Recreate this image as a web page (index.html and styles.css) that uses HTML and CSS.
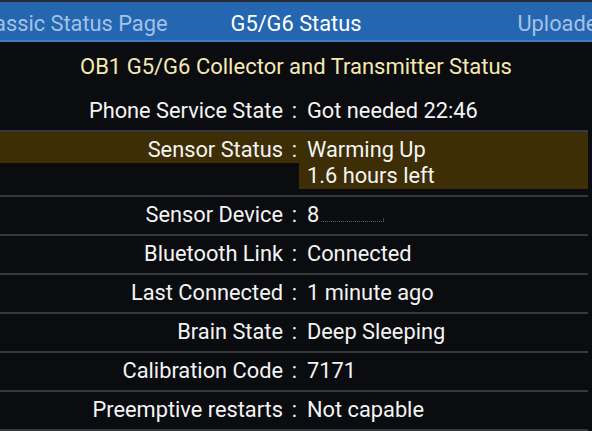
FILE: index.html
```html
<!DOCTYPE html>
<html>
<head>
<meta charset="utf-8">
<link rel="stylesheet" href="styles.css">
</head>
<body>
<div class="topbar">
  <div class="tab tab-prev"><span>Classic Status Page</span></div>
  <div class="tab tab-current">G5/G6 Status</div>
  <div class="tab tab-next"><span>Uploader Status</span></div>
</div>
<div class="title">OB1 G5/G6 Collector and Transmitter Status</div>
<div class="list">
  <div class="row">
    <div class="label">Phone Service State</div><div class="colon">:</div><div class="value">Got needed 22:46</div>
  </div>
  <div class="row row-warn">
    <div class="label">Sensor Status</div><div class="colon">:</div><div class="value">Warming Up<br>1.6 hours left</div>
  </div>
  <div class="row">
    <div class="label">Sensor Device</div><div class="colon">:</div><div class="value">8<span class="masked"></span></div>
  </div>
  <div class="row">
    <div class="label">Bluetooth Link</div><div class="colon">:</div><div class="value">Connected</div>
  </div>
  <div class="row">
    <div class="label">Last Connected</div><div class="colon">:</div><div class="value">1 minute ago</div>
  </div>
  <div class="row">
    <div class="label">Brain State</div><div class="colon">:</div><div class="value">Deep Sleeping</div>
  </div>
  <div class="row">
    <div class="label">Calibration Code</div><div class="colon">:</div><div class="value">7171</div>
  </div>
  <div class="row">
    <div class="label">Preemptive restarts</div><div class="colon">:</div><div class="value">Not capable</div>
  </div>
</div>
</body>
</html>
```

FILE: styles.css
```css
html, body {
  margin: 0;
  padding: 0;
  background: #0b0c10;
  overflow: hidden;
}
body {
  font-family: Roboto, "Noto Sans", sans-serif;
  font-size: 21.8px;
  color: #f4f4f4;
  width: 592px;
  height: 431px;
}
.topbar {
  display: grid;
  grid-template-columns: 1fr auto 1fr;
  background: #2467b0;
  border-top: 2px solid #262b33;
  border-bottom: 2px solid #3d7cc2;
  height: 38px;
  box-sizing: content-box;
  line-height: 25px;
}
.tab {
  padding-top: 9px;
  white-space: nowrap;
  overflow: hidden;
}
.tab-prev {
  display: flex;
  justify-content: flex-end;
  padding-right: 63px;
  color: #a3c1e6;
}
.tab-current {
  color: #ffffff;
}
.tab-next {
  display: flex;
  justify-content: flex-start;
  padding-left: 156px;
  color: #a3c1e6;
}
.title {
  text-align: center;
  color: #f5e9b1;
  font-size: 22px;
  line-height: 25px;
  padding-top: 12px;
  padding-bottom: 14px;
  height: 25px;
  box-sizing: content-box;
}
.row {
  display: grid;
  grid-template-columns: 283px 16px 1fr;
  align-items: start;
  padding-bottom: 6px;
  border-bottom: 2px solid #35383e;
  margin-right: 4px;
  line-height: 26px;
}
.label, .colon, .value {
  padding-top: 5px;
  padding-bottom: 0;
  white-space: nowrap;
}
.label {
  text-align: right;
}
.colon {
  text-align: center;
  padding-left: 7px;
}
.value {
  padding-left: 8px;
}
.row-warn .label,
.row-warn .colon,
.row-warn .value {
  background: #3d2e06;
}
.masked {
  display: inline-block;
  width: 62px;
  height: 3px;
  border-bottom: 1px dotted #5a5a5a;
  border-right: 1px solid #444;
  margin-left: 2px;
}
```
